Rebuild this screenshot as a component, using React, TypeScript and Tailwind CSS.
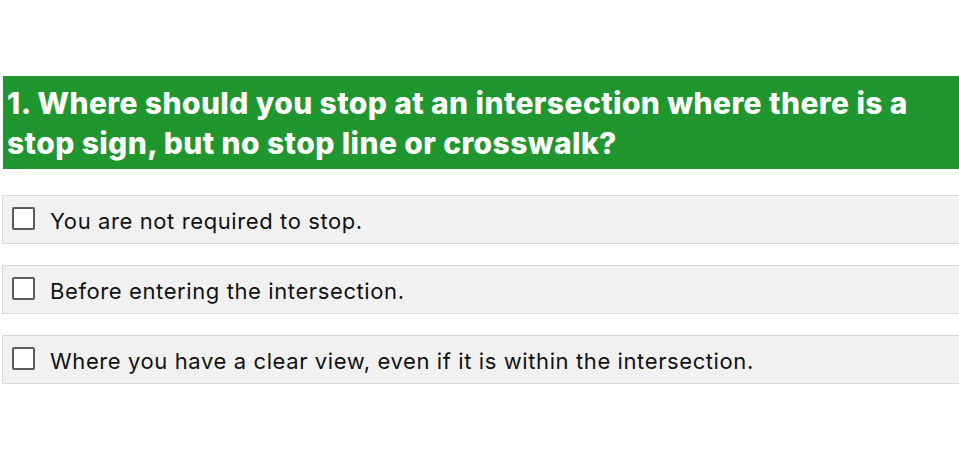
export default function App() {
  const options = [
    "You are not required to stop.",
    "Before entering the intersection.",
    "Where you have a clear view, even if it is within the intersection.",
  ];
  return (
    <div className="w-[959px] h-[475px] bg-white pt-[76px] overflow-hidden" style={{ fontFamily: "Inter, 'Noto Sans', sans-serif" }}>
      <div className="ml-[3px] h-[93px] bg-[#1f962e] pl-[4px] pt-[7px] text-white font-extrabold text-[30px] leading-[40px] tracking-[0.4px]">
        1. Where should you stop at an intersection where there is a stop sign, but no stop line or crosswalk?
      </div>
      <div className="mt-[26px] ml-[2px] flex flex-col gap-[21px]">
        {options.map((o) => (
          <div key={o} className="h-[49px] bg-[#f1f1f1] border border-[#d9d9d9] border-r-0 flex items-center pl-[9px]">
            <div className="w-[23px] h-[23px] mb-[3px] border-2 border-[#5a5a5a] bg-white rounded-[2px] shrink-0" />
            <span className="ml-[15px] mt-[3px] text-[22px] tracking-[0.6px] text-[#111]">{o}</span>
          </div>
        ))}
      </div>
    </div>
  );
}
